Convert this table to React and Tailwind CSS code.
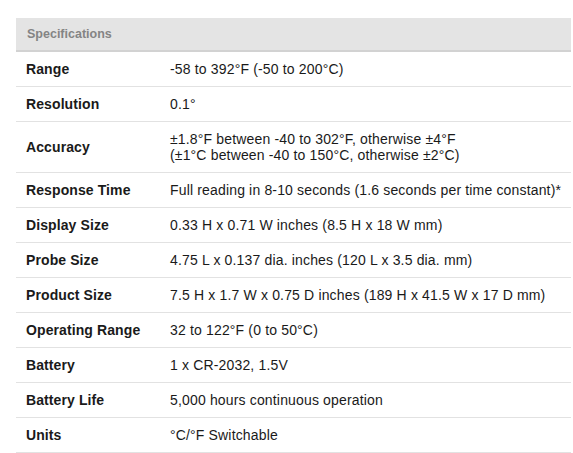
import React from "react";

const specs = [
  { label: "Range", value: ["-58 to 392°F (-50 to 200°C)"] },
  { label: "Resolution", value: ["0.1°"] },
  {
    label: "Accuracy",
    value: [
      "±1.8°F between -40 to 302°F, otherwise ±4°F",
      "(±1°C between -40 to 150°C, otherwise ±2°C)",
    ],
  },
  {
    label: "Response Time",
    value: ["Full reading in 8-10 seconds (1.6 seconds per time constant)*"],
  },
  { label: "Display Size", value: ["0.33 H x 0.71 W inches (8.5 H x 18 W mm)"] },
  { label: "Probe Size", value: ["4.75 L x 0.137 dia. inches (120 L x 3.5 dia. mm)"] },
  {
    label: "Product Size",
    value: ["7.5 H x 1.7 W x 0.75 D inches (189 H x 41.5 W x 17 D mm)"],
  },
  { label: "Operating Range", value: ["32 to 122°F (0 to 50°C)"] },
  { label: "Battery", value: ["1 x CR-2032, 1.5V"] },
  { label: "Battery Life", value: ["5,000 hours continuous operation"] },
  { label: "Units", value: ["°C/°F Switchable"] },
];

export default function App() {
  return (
    <div className="min-h-screen bg-white pt-[18px] pl-4 pr-[2px] font-['Liberation_Sans',Arial,sans-serif]">
      <table className="w-full border-collapse text-[14px] leading-4 text-[#1a1a1a]">
        <thead>
          <tr className="bg-[#e4e4e4] border-b-2 border-[#d2d2d2]">
            <th
              colSpan={2}
              className="px-[11px] py-2 text-left text-[12.5px] font-bold text-[#848484]"
            >
              Specifications
            </th>
          </tr>
        </thead>
        <tbody>
          {specs.map((row) => (
            <tr key={row.label} className="border-b border-[#e2e2e2]">
              <td className="w-[154px] px-[10px] py-[9px] font-bold tracking-[0.1px] align-middle">
                {row.label}
              </td>
              <td className="py-[9px] tracking-[0.16px] align-middle">
                {row.value.map((line) => (
                  <div key={line}>{line}</div>
                ))}
              </td>
            </tr>
          ))}
        </tbody>
      </table>
    </div>
  );
}
